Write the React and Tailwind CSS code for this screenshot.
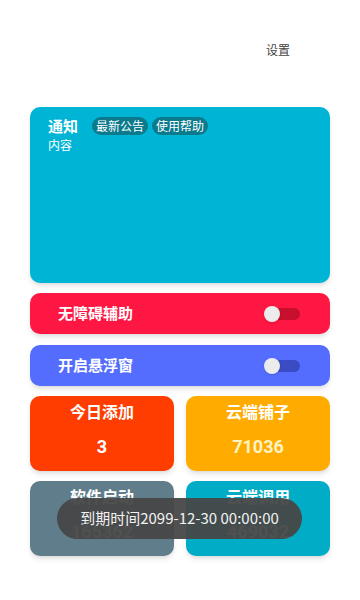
import React from 'react';

const font = { fontFamily: '"Noto Sans CJK SC", "Noto Sans", Roboto, sans-serif' };

function Toggle({ track }) {
    return (
        <div className="relative w-[36px] h-[16px] flex items-center">
            <div className={`ml-[8px] w-[28px] h-[12px] rounded-full ${track}`} />
            <div className="absolute left-0 top-0 w-[16px] h-[16px] rounded-full bg-[#ececec] shadow" />
        </div>
    );
}

function StatCard({ title, value, bg, valueColor = 'text-white' }) {
    return (
        <div className={`h-[75px] rounded-[10px] shadow-md flex flex-col items-center pt-[4px] ${bg}`}>
            <span className="text-[16px] font-bold text-white leading-[22px]">{title}</span>
            <span className={`mt-[14px] text-[18px] font-bold leading-[22px] ${valueColor}`} style={{ fontFamily: 'Roboto, sans-serif' }}>{value}</span>
        </div>
    );
}

export default function App() {
    return (
        <div className="relative w-[360px] h-[600px] bg-white" style={font}>
            {/* Header */}
            <div className="h-[107px] flex justify-end pr-[70px] pt-[41px]">
                <span className="text-[12px] text-[#444] leading-[18px]">设置</span>
            </div>

            <div className="px-[30px] flex flex-col">
                {/* Notice card */}
                <div className="h-[176px] rounded-[10px] bg-[#00b4d6] shadow-md px-[18px] pt-[9px]">
                    <div className="flex items-center">
                        <span className="text-[15px] font-bold text-white leading-[20px]">通知</span>
                        <span className="ml-[14px] h-[18px] px-[4px] rounded-full bg-[#0b7a8c] text-[12px] text-white leading-[18px]">最新公告</span>
                        <span className="ml-[4px] h-[18px] px-[4px] rounded-full bg-[#0b7a8c] text-[12px] text-white leading-[18px]">使用帮助</span>
                    </div>
                    <div className="text-[12px] text-white leading-[16px] mt-[1px]">内容</div>
                </div>

                {/* Switch rows */}
                <div className="mt-[10px] h-[41px] rounded-[10px] bg-[#ff1744] shadow-md flex items-center justify-between pl-[28px] pr-[30px]">
                    <span className="text-[15px] font-semibold text-white">无障碍辅助</span>
                    <Toggle track="bg-[#c8102e]" />
                </div>
                <div className="mt-[11px] h-[41px] rounded-[10px] bg-[#546dfe] shadow-md flex items-center justify-between pl-[28px] pr-[30px]">
                    <span className="text-[15px] font-semibold text-white">开启悬浮窗</span>
                    <Toggle track="bg-[#3a4cc4]" />
                </div>

                {/* Stats */}
                <div className="mt-[10px] grid grid-cols-2 gap-x-[12px] gap-y-[10px]">
                    <StatCard title="今日添加" value="3" bg="bg-[#ff3d00]" />
                    <StatCard title="云端铺子" value="71036" bg="bg-[#ffab00]" valueColor="text-[#fff3c4]" />
                    <StatCard title="软件启动" value="165362" bg="bg-[#607d8b]" />
                    <StatCard title="云端调用" value="469032" bg="bg-[#00acc6]" />
                </div>
            </div>

            {/* Toast */}
            <div className="absolute left-[57px] top-[498px] w-[245px] h-[41px] rounded-full bg-[#474747]/95 flex items-center justify-center">
                <span className="text-[15px] text-[#f2f2f2]">到期时间2099-12-30 00:00:00</span>
            </div>
        </div>
    );
}
